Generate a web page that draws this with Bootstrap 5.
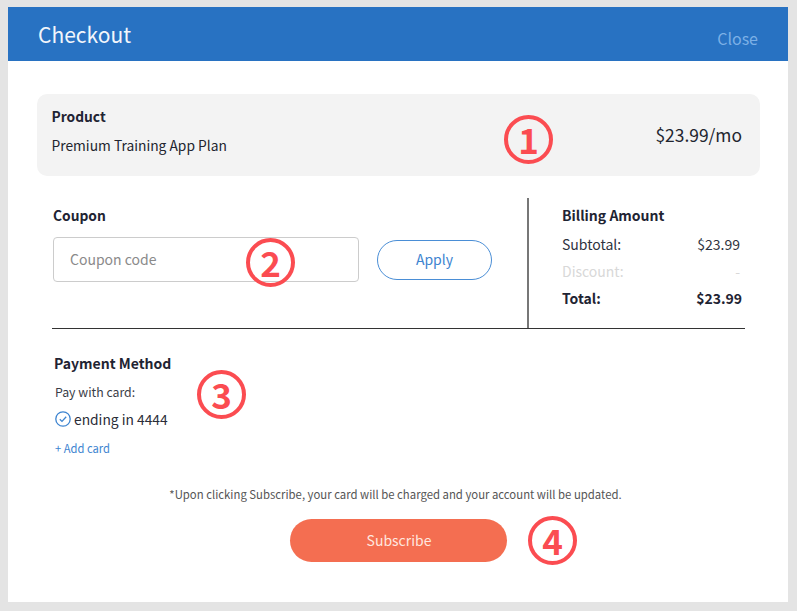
<!DOCTYPE html>
<html lang="en">
<head>
  <meta charset="UTF-8">
  <meta name="viewport" content="width=device-width, initial-scale=1.0">
  <title>Checkout</title>
  <link href="https://cdn.jsdelivr.net/npm/bootstrap@5.3.0/dist/css/bootstrap.min.css" rel="stylesheet">
  <style>
    html, body { height: 100%; overflow: hidden; }
    body { background: #e4e4e4; font-family: "Noto Sans CJK KR", "Noto Sans", sans-serif; color: #22252f; padding: 7px 9px 9px 8px; }
    .panel { position: relative; height: 595px; background: #fff; }
    .panel-head { height: 54px; background: #2872c2; padding: 0 30px; }
    .panel-title { font-size: 21px; color: #f2f6fb; line-height: 1; }
    .panel-close { font-size: 16px; color: #7cb0e6; line-height: 1; margin-top: 7px; }
    .product-box { margin: 33px 28px 0 29px; height: 82px; background: #f3f3f3; border-radius: 10px; padding: 0 18px 0 14.5px; }
    .product-info { padding-bottom: 9px; }
    .sec-label { font-size: 13.8px; font-weight: 700; color: #1f2433; line-height: 20px; }
    .sec-wide { font-size: 14px; }
    .plain-line { font-size: 13.8px; line-height: 20px; margin-top: 9px; }
    .price-big { font-size: 17.4px; line-height: 24px; }
    .billing-row { margin: 22px 0 0 44px; width: 693px; height: 131px; border-bottom: 1px solid #333; }
    .coupon-side { width: 477px; border-right: 2px solid #777; padding: 7px 0 0 1px; }
    .coupon-row { margin-top: 12px; }
    .coupon-input { width: 306px; height: 45px; border: 1px solid #ccc; border-radius: 4px; padding: 0 16px 2px; font-size: 14px; color: #333; font-family: inherit; }
    .coupon-input::placeholder { color: #8a8a8a; opacity: 1; }
    .apply-btn { width: 115px; height: 40px; margin-left: 18px; border: 1px solid #4a8ed6; border-radius: 20px; background: #fff; color: #3d84d0; font-size: 14px; padding: 0; }
    .amount-side { width: 214px; padding: 7px 0 0 33px; }
    .amount-line { font-size: 14px; line-height: 20px; margin-top: 7px; padding-right: 3px; color: #2f3340; }
    .amount-first { margin-top: 9px; }
    .amount-off { color: #d8d8d8; padding-right: 3px; }
    .amount-total { font-weight: 700; color: #1f2433; padding-right: 1px; }
    .pay-block { margin: 24px 0 0 45px; }
    .pay-title { margin-left: 1px; }
    .pay-sub { font-size: 12.3px; line-height: 18px; margin: 10px 0 0 2px; color: #3a3d47; }
    .card-line { font-size: 13.8px; line-height: 20px; margin: 8px 0 0 2px; color: #2a2d38; gap: 3px; }
    .add-link { font-size: 11.2px; line-height: 16px; color: #3d84d0; text-decoration: none; margin: 11px 0 0 2px; display: inline-block; }
    .fine-print { font-size: 11.35px; line-height: 16px; color: #555; margin: 28px 5px 0 0; }
    .subscribe-btn { width: 217px; height: 43px; margin-top: 17px; border: 0; border-radius: 22px; background: #f46e51; color: #ffe6df; font-size: 14px; padding: 0 0 0 2px; }
    .step-mark { position: absolute; width: 49px; height: 49px; border: 4px solid #fb4c51; border-radius: 50%; color: #fb4c51; font-size: 35px; font-weight: 700; line-height: 39px; text-align: center; background: transparent; }
    .step-1 { left: 496px; top: 108px; }
    .step-2 { left: 238px; top: 231px; }
    .step-3 { left: 189px; top: 363px; }
    .step-4 { left: 520px; top: 509px; }
  </style>
</head>
<body>
  <div class="panel">
    <div class="panel-head d-flex justify-content-between align-items-center">
      <div class="panel-title">Checkout</div>
      <div class="panel-close">Close</div>
    </div>

    <div class="product-box d-flex justify-content-between align-items-center">
      <div class="product-info">
        <div class="sec-label">Product</div>
        <div class="plain-line">Premium Training App Plan</div>
      </div>
      <div class="price-big">$23.99/mo</div>
    </div>

    <div class="billing-row d-flex">
      <div class="coupon-side">
        <div class="sec-label">Coupon</div>
        <div class="coupon-row d-flex align-items-center">
          <input class="coupon-input" type="text" placeholder="Coupon code">
          <button class="apply-btn" type="button">Apply</button>
        </div>
      </div>
      <div class="amount-side">
        <div class="sec-label sec-wide">Billing Amount</div>
        <div class="amount-line amount-first d-flex justify-content-between"><span>Subtotal:</span><span>$23.99</span></div>
        <div class="amount-line amount-off d-flex justify-content-between"><span>Discount:</span><span>-</span></div>
        <div class="amount-line amount-total d-flex justify-content-between"><span>Total:</span><span>$23.99</span></div>
      </div>
    </div>

    <div class="pay-block">
      <div class="sec-label sec-wide pay-title">Payment Method</div>
      <div class="pay-sub">Pay with card:</div>
      <div class="card-line d-flex align-items-center">
        <svg width="16" height="16" viewBox="0 0 16 16" fill="none" stroke="#3d84d0" stroke-width="1.3"><circle cx="8" cy="8" r="7.2"/><path d="M4.8 8.2l2.2 2.2 4.2-4.6"/></svg>
        <span>ending in 4444</span>
      </div>
      <a class="add-link" href="#">+ Add card</a>
    </div>

    <div class="text-center">
      <div class="fine-print">*Upon clicking Subscribe, your card will be charged and your account will be updated.</div>
      <button class="subscribe-btn" type="button">Subscribe</button>
    </div>

    <div class="step-mark step-1">1</div>
    <div class="step-mark step-2">2</div>
    <div class="step-mark step-3">3</div>
    <div class="step-mark step-4">4</div>
  </div>
  <script src="https://cdn.jsdelivr.net/npm/bootstrap@5.3.0/dist/js/bootstrap.bundle.min.js"></script>
</body>
</html>
